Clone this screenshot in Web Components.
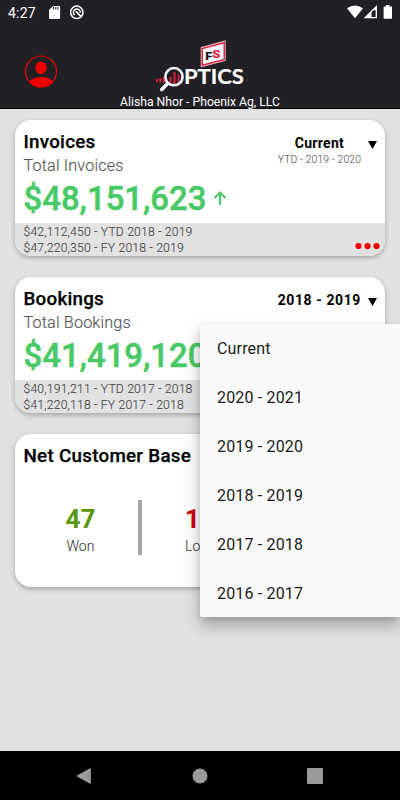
<!DOCTYPE html>
<html lang="en">
<head>
<meta charset="utf-8">
<title>FS Optics</title>
<style>
html,body{margin:0;height:100%;background:#e2e2e2;font-family:Roboto,"Noto Sans",sans-serif}
body{width:400px;height:800px;overflow:hidden}
</style>
</head>
<body>
<optics-app></optics-app>
<script>
const define = (name, html, setup) => customElements.define(name, class extends HTMLElement {
  constructor(){
    super();
    const t = document.createElement('template');
    t.innerHTML = html;
    this.attachShadow({mode:'open'}).append(t.content.cloneNode(true));
  }
  connectedCallback(){ if (setup) setup(this, this.shadowRoot); }
});

define('status-bar', `
<style>
:host{display:flex;height:25px;box-sizing:border-box;color:#fff;align-items:center;padding:0 7px 0 8px}
span{font-size:14px;line-height:26px;width:40px;letter-spacing:.2px}
svg{display:block}
.right{margin-left:auto}
</style>
<span>4:27</span>
<svg width="36" height="25" viewBox="48 0 36 25">
 <path d="M53 6h6.200q.9 0 .9 1v10.700q0 1.300-1.300 1.300h-8.500q-1.300 0-1.300-1.300V10z" fill="#fff"/>
 <path d="M53.600 7v2.600M55.800 7v2.600M58 7v2.600" stroke="#212025" stroke-width="1"/>
 <circle cx="76.800" cy="12.300" r="6.200" fill="none" stroke="#fff" stroke-width="1.500"/>
 <path d="M74.600 15.200A3.500 3.500 0 1 1 80.300 12.800" fill="none" stroke="#fff" stroke-width="1.500"/>
 <path d="M75.800 11.300l5.800 5.800" stroke="#fff" stroke-width="1.800"/>
</svg>
<svg class="right" width="47" height="25" viewBox="346 0 47 25">
 <path d="M347 8.300Q355 2.500 363 8.300L355 18.300z" fill="#fff"/>
 <path d="M376.300 6.500V17.600H365.200z" fill="none" stroke="#fff" stroke-width="1.300"/>
 <path d="M365 18L376.500 6.500V10.200H371.500V18z" fill="#fff"/>
 <path d="M372 11.500h2.800v5.500h-2.800z" fill="#212025"/>
 <path d="M384 6.600h2V5h3.400v1.600h2q.6 0 .6.600v10.900q0 .7-.7.700h-7q-.7 0-.7-.7V7.200q0-.6.400-.6z" fill="#fff"/>
</svg>`);

define('optics-logo', `
<style>:host{display:block}svg{display:block}</style>
<svg width="92" height="52" viewBox="154 40 92 52">
 <path d="M201.400 47.700L225 41.300V60.300L201.400 66.500z" fill="#fff" stroke="#e9b5c0" stroke-width="1.400" stroke-linejoin="round"/>
 <path d="M202.300 48.600L224.200 42.700V59.500L202.300 65.300z" fill="#fff" stroke="#dc2340" stroke-width="1.400"/>
 <g transform="translate(205.200 60.400) scale(1.180 1)">
  <text font-family="Roboto" font-weight="900" font-size="11"><tspan fill="#18171b">F</tspan><tspan dy="-2.500" fill="#dc2340">S</tspan></text>
 </g>
 <path d="M157 79v3M160.300 78v4.500M163.700 77v6M170.500 77v7M174.500 72v12.500M178.600 74.500v9M181.800 76v5" stroke="#d51f3d" stroke-width="2"/>
 <circle cx="174" cy="76.700" r="8.600" fill="none" stroke="#fff" stroke-width="2.500"/>
 <path d="M167.600 83.600L161.800 89.500" stroke="#fff" stroke-width="3.600" stroke-linecap="round"/>
 <text x="183.900" y="83.700" font-family="Lato" font-weight="700" font-size="21.500" fill="#fff" stroke="#fff" stroke-width=".2" textLength="60" lengthAdjust="spacingAndGlyphs">PTICS</text>
</svg>`);

define('app-header', `
<style>
:host{display:block;height:109px;background:#212025;box-shadow:inset 0 -1px #000}
.row{display:grid;grid-template-columns:154px 92px 1fr;height:67px;padding-top:15px;box-sizing:border-box}
.avatar{display:block;margin:15px 0 0 24px}
p{margin:2px 0 0;text-align:center;color:#fff;font-size:12.200px;line-height:16px}
</style>
<status-bar></status-bar>
<div class="row">
 <svg class="avatar" width="34" height="34" viewBox="24 55 34 34"><defs><clipPath id="c"><circle cx="41" cy="71.500" r="15.500"/></clipPath></defs>
 <circle cx="41" cy="71.500" r="15.500" fill="none" stroke="#e00" stroke-width="1.200"/>
 <ellipse cx="41" cy="67.800" rx="5.700" ry="6.300" fill="#e00"/><ellipse cx="41" cy="85.500" rx="13.500" ry="8.500" fill="#e00" clip-path="url(#c)"/></svg>
 <optics-logo></optics-logo>
</div>
<p>Alisha Nhor - Phoenix Ag, LLC</p>`);

define('info-card', `
<style>
:host{display:block;background:#fff;border-radius:16px;overflow:hidden;box-shadow:0 2px 5px rgba(0,0,0,.28);box-sizing:border-box}
</style><slot></slot>`);

define('metric-card', `
<style>
:host{display:block}
info-card{height:136.500px}
.top{display:flex;justify-content:space-between;height:103.500px;padding:9px 8px 0 8.500px;box-sizing:border-box}
h2{margin:0;font-size:18.800px;line-height:26px;font-weight:500;color:#000;-webkit-text-stroke:.25px #000;letter-spacing:.25px}
.sub{font-size:16.200px;line-height:22px;color:#555;font-weight:300;-webkit-text-stroke:.15px #555;letter-spacing:.15px}
.amount{display:flex;align-items:center;color:#47c965;font-size:32.900px;line-height:43px;font-weight:500;-webkit-text-stroke:.5px #47c965;gap:7px}
.amount svg{display:block;margin-top:0}
.right{display:flex;gap:7px;padding-top:4px}
.pick{text-align:center;font-weight:700;font-size:14px;line-height:20px;color:#000;letter-spacing:.3px}
.pick.wide{letter-spacing:.6px}
.pick small{display:block;font-weight:300;font-size:10.400px;line-height:14px;color:#444;letter-spacing:.1px}
.tri{width:9px;height:8px;background:#000;clip-path:polygon(0 0,100% 0,50% 100%);margin-top:8.500px}
.foot{display:flex;justify-content:space-between;height:33px;background:#e2e2e2;padding:0 5px 0 8.500px;box-sizing:border-box;font-size:12.200px;line-height:16.500px;color:#444;font-weight:300;-webkit-text-stroke:.12px #444;letter-spacing:.17px}
.foot svg{display:block;margin-top:18.500px}
.foot>div{margin-top:.5px}
</style>
<info-card>
 <div class="top">
  <div><h2></h2><div class="sub"></div><div class="amount"><span></span><svg width="14" height="16" viewBox="0 0 14 16"><path d="M7 15V2.500M1.500 8L7 2.500L12.500 8" fill="none" stroke="#47c965" stroke-width="2"/></svg></div></div>
  <div class="right"><div class="pick"><span></span><small></small></div><div class="tri"></div></div>
 </div>
 <div class="foot"><div><div class="a"></div><div class="b"></div></div>
 <svg width="25" height="8"><circle cx="3.500" cy="4" r="3.100" fill="#e00"/><circle cx="12.500" cy="4" r="3.100" fill="#e00"/><circle cx="21.500" cy="4" r="3.100" fill="#e00"/></svg></div>
</info-card>`, (el, r) => {
  const put = (s, k) => r.querySelector(s).textContent = el.getAttribute(k) || '';
  put('h2','heading'); put('.sub','label'); put('.amount span','amount');
  put('.pick span','period'); put('small','range'); put('.a','ytd'); put('.b','fy');
  if (!el.hasAttribute('range')) { r.querySelector('small').remove(); r.querySelector('.pick').classList.add('wide'); }
  if (el.hasAttribute('plain')) r.querySelectorAll('svg').forEach(s => s.remove());
});

define('customer-card', `
<style>
:host{display:block}
info-card{height:153px}
h2{margin:0;padding:9px 0 0 8.500px;font-size:18.800px;line-height:26px;font-weight:500;color:#000;-webkit-text-stroke:.25px #000;letter-spacing:.28px}
.stats{display:grid;grid-template-columns:123px 4px 1fr;margin-top:31px}
.bar{background:#a6a6a6;height:55px}
.s{text-align:center;padding-left:8px}
.l{text-align:left;padding-left:43px}
b{display:block;font-size:26px;line-height:38px;font-weight:700;color:#5a9606}
.l b{color:#c8000a}
small{display:block;font-size:14px;line-height:17px;font-weight:300;color:#444;-webkit-text-stroke:.12px #444;letter-spacing:.1px}
</style>
<info-card><h2>Net Customer Base</h2><div class="stats">
<div class="s"><b>47</b><small>Won</small></div><div class="bar"></div><div class="s l"><b>1</b><small>Lo</small></div></div></info-card>`);

define('period-menu', `
<style>
:host{display:block;width:200px;height:293.500px;background:#fafafa;border-radius:2px 0 0 2px;box-shadow:0 9px 16px rgba(0,0,0,.27),0 2px 6px rgba(0,0,0,.1)}
div{height:49px;line-height:50px;padding-left:17px;font-size:16px;color:#1a1a1a;letter-spacing:.17px}
</style>
<div>Current</div><div>2020 - 2021</div><div>2019 - 2020</div><div>2018 - 2019</div><div>2017 - 2018</div><div>2016 - 2017</div>`);

define('nav-bar', `
<style>:host{display:grid;grid-template-columns:1fr 1fr 1fr;align-items:center;justify-items:center;height:49px;background:#000;box-sizing:border-box;padding:0 27px}svg{display:block}</style>
<svg width="18" height="18"><path d="M.2 9L14.100 1.200q.8-.3.800.5v14.600q0 .8-.8.500z" fill="#999"/></svg>
<svg width="16" height="16"><circle cx="8" cy="8" r="7.500" fill="#999"/></svg>
<svg width="16" height="16"><rect width="16" height="16" rx="1" fill="#999"/></svg>`);

define('optics-app', `
<style>
:host{display:flex;flex-direction:column;width:400px;height:800px;position:relative;overflow:hidden;background:#e2e2e2}
main{flex:1;display:flex;flex-direction:column;gap:20.500px;padding:10.500px 15px 0}
period-menu{position:absolute;left:200px;top:323.500px}
</style>
<app-header></app-header>
<main>
<metric-card heading="Invoices" label="Total Invoices" amount="$48,151,623" period="Current" range="YTD - 2019 - 2020" ytd="$42,112,450 - YTD 2018 - 2019" fy="$47,220,350 - FY 2018 - 2019"></metric-card>
<metric-card plain heading="Bookings" label="Total Bookings" amount="$41,419,120" period="2018 - 2019" ytd="$40,191,211 - YTD 2017 - 2018" fy="$41,220,118 - FY 2017 - 2018"></metric-card>
<customer-card></customer-card>
</main>
<nav-bar></nav-bar>
<period-menu></period-menu>`);
</script>
</body>
</html>
